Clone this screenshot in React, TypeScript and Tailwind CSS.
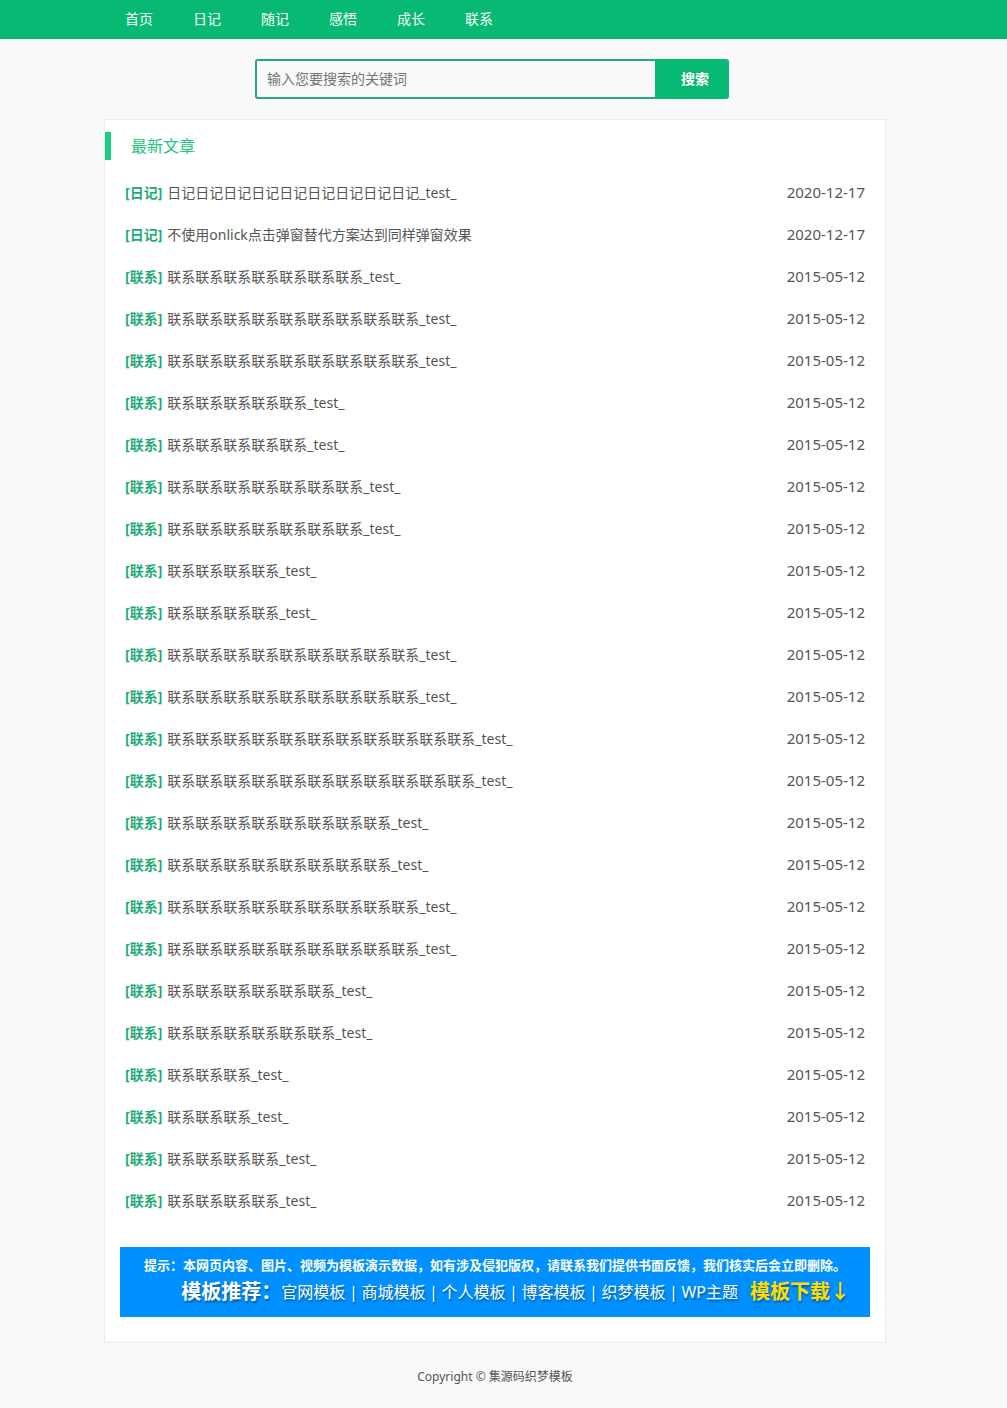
import React from "react";

const navItems = ["首页", "日记", "随记", "感悟", "成长", "联系"];

type Article = { category: string; title: string; date: string };

const contactRepeats = [7, 9, 9, 5, 5, 7, 7, 4, 4, 9, 9, 11, 11, 8, 8, 9, 9, 6, 6, 3, 3, 4, 4];

const articles: Article[] = [
  { category: "日记", title: "日记".repeat(9) + "_test_", date: "2020-12-17" },
  { category: "日记", title: "不使用onlick点击弹窗替代方案达到同样弹窗效果", date: "2020-12-17" },
  ...contactRepeats.map((count) => ({
    category: "联系",
    title: "联系".repeat(count) + "_test_",
    date: "2015-05-12",
  })),
];

const templateLinks = ["官网模板", "商城模板", "个人模板", "博客模板", "织梦模板", "WP主题"];

function Header() {
  return (
    <header className="bg-[#07b972] pr-[17px]">
      <nav className="mx-auto flex max-w-[780px] flex-wrap pb-px">
        {navItems.map((item) => (
          <a key={item} href="#" className="px-5 text-sm leading-[38px] text-white">
            {item}
          </a>
        ))}
      </nav>
    </header>
  );
}

function SearchBar() {
  return (
    <form className="mx-auto my-5 flex h-10 max-w-[480px]" onSubmit={(e) => e.preventDefault()}>
      <input
        type="text"
        aria-label="输入您要搜索的关键词"
        placeholder="输入您要搜索的关键词"
        className="w-[400px] min-w-0 rounded-l-[3px] border-2 border-r-0 border-[#27ab75] bg-transparent px-2.5 text-sm text-[#555] outline-none placeholder:text-[#757575]"
      />
      <button
        type="submit"
        className="w-[74px] shrink-0 rounded-r-[3px] bg-[#07b972] pl-1.5 text-sm font-bold text-white"
      >
        搜索
      </button>
    </form>
  );
}

function ArticleList() {
  return (
    <ul className="mt-3 px-5">
      {articles.map((article, index) => (
        <li key={index} className="flex justify-between text-[#555]">
          <div className="flex gap-[5px] text-sm leading-[42px]">
            <a href="#" className="shrink-0 font-bold text-[#1fab75]">
              [{article.category}]
            </a>
            <a href="#">{article.title}</a>
          </div>
          <time className="shrink-0 text-[15px] leading-10">{article.date}</time>
        </li>
      ))}
    </ul>
  );
}

function Banner() {
  return (
    <div className="mx-[15px] my-[25px] flex min-h-[70px] flex-col bg-[#0090ff] pt-2 text-white">
      <p className="text-center text-[13px] leading-5 font-bold">
        提示：本网页内容、图片、视频为模板演示数据，如有涉及侵犯版权，请联系我们提供书面反馈，我们核实后会立即删除。
      </p>
      <div className="flex items-center justify-end pr-5 leading-[34px] [text-shadow:1px_2px_2px_rgba(0,0,0,0.35)]">
        <strong className="text-xl leading-[34px]">模板推荐：</strong>
        {templateLinks.map((link, index) => (
          <React.Fragment key={link}>
            {index > 0 && <span className="w-4 text-center">|</span>}
            <a href="#">{link}</a>
          </React.Fragment>
        ))}
        <a href="#" className="ml-3 text-xl leading-[34px] font-bold text-[#ffdc00]">
          模板下载↓
        </a>
      </div>
    </div>
  );
}

export default function App() {
  return (
    <div className="min-h-screen bg-[#f9f9f9] font-['Noto_Sans','Noto_Sans_CJK_SC',sans-serif]">
      <Header />
      <div className="pr-[17px]">
        <SearchBar />
        <main className="mx-auto max-w-[782px] border border-[#ebebeb] bg-white pt-3">
          <h2 className="border-l-[6px] border-[#1acd86] pl-5 text-base leading-7 text-[#22c581]">最新文章</h2>
          <ArticleList />
          <Banner />
        </main>
        <footer className="pt-[22px] pb-5 text-center text-xs leading-6 text-[#555]">
          Copyright © 集源码织梦模板
        </footer>
      </div>
    </div>
  );
}
